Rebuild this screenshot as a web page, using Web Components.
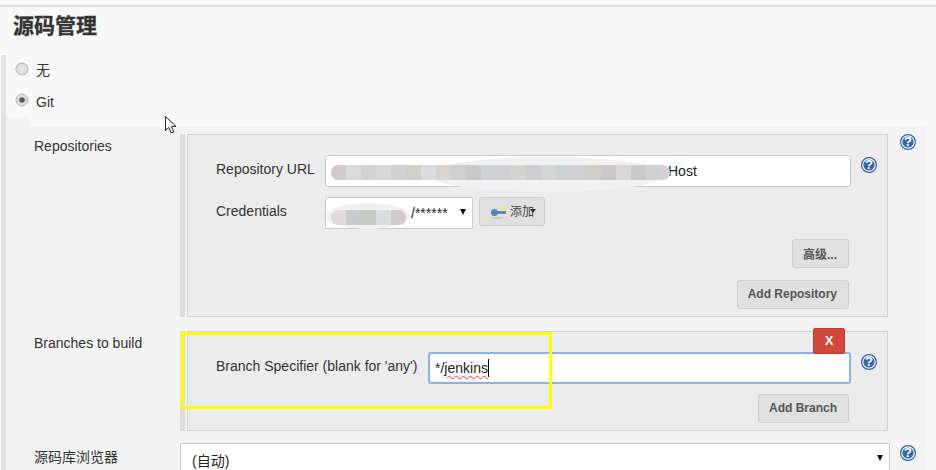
<!DOCTYPE html>
<html lang="zh">
<head>
<meta charset="utf-8">
<title>源码管理</title>
<style>
  html, body { margin: 0; height: 470px; overflow: hidden; background: #f9f9f9; }
  body { font: 14px "Liberation Sans", "Noto Sans CJK SC", sans-serif; color: #333; }
</style>
</head>
<body>
<jk-page>
  <jk-heading slot="head">源码管理</jk-heading>
  <jk-radio style="--shift:-1px">无</jk-radio>
  <jk-radio checked style="--shift:1px">Git</jk-radio>
  <jk-panel slot="panel">
    <jk-row label="Repositories">
      <jk-block>
        <jk-field label="Repository URL" style="--label-width:109px">
          <jk-input style="--text-indent:342px">Host</jk-input>
        </jk-field>
        <jk-field label="Credentials" style="--label-width:109px">
          <jk-select style="--select-width:148px;--text-indent:85px;--select-height:32px">/******</jk-select>
          <jk-button icon style="margin-left:6px;align-self:flex-start">添加</jk-button>
        </jk-field>
        <jk-actions><jk-button>高级...</jk-button></jk-actions>
        <jk-actions style="margin-top:2px"><jk-button>Add Repository</jk-button></jk-actions>
      </jk-block>
    </jk-row>
    <jk-row label="Branches to build" style="margin-top:14px" nohelp>
      <jk-block>
        <jk-delete slot="over">X</jk-delete>
        <jk-field label="Branch Specifier (blank for 'any')" style="--label-width:212px">
          <jk-input focused style="--text-indent:6px"><jk-typed>*/<u>jenkins</u></jk-typed></jk-input>
        </jk-field>
        <jk-actions><jk-button>Add Branch</jk-button></jk-actions>
      </jk-block>
    </jk-row>
    <jk-row label="源码库浏览器" style="margin-top:12px" lower>
      <jk-select style="--select-width:710px;--text-indent:11px;--select-height:40px;--select-line:34px">(自动)</jk-select>
    </jk-row>
  </jk-panel>
  <jk-mosaic slot="over" style="left:331px;top:165px;width:339px" colors="#d3c9cb #d9dcda #d3d4cf #d8d8d8 #d2d2d4 #d0d0c8 #d9dde0 #d9d4d0 #cfcfd3 #c9c9c8 #cdd0d6 #d0ced2 #d4d3d0 #ccced1 #d3d6d4 #cbd3d2 #cfced5 #cfcfc8 #cdc7cc #d8d8d6 #cbc9ca #d2d0d3 #d4d2d4" smear="left:96px;top:-8px;width:240px;height:35px"></jk-mosaic>
  <jk-mosaic slot="over" style="left:331px;top:210px;width:75px" colors="#e0dada #c9cbcd #c9cbc6 #d9dfdf #d2cbce" smear="left:-5px;top:-7px;width:84px;height:26px"></jk-mosaic>
  <jk-highlight slot="over"></jk-highlight>
  <jk-cursor slot="over"></jk-cursor>
</jk-page>

<script>
// small helper, every element has the same shadow setup
function shadow(el, html) {
  const root = el.attachShadow({ mode: 'open' });
  root.innerHTML = html;
  return root;
}

class JkPage extends HTMLElement {
  constructor() {
    super();
    shadow(this, `
      <style>
        :host { display: block; position: relative; height: 470px; overflow: hidden; padding-top: 5px; box-sizing: border-box; }
        .rule { height: 2px; background: #e0e0e0; }
        .section { margin: 0 0 0 1px; border-left: 5px solid #e2e2e2; }
        .radios { padding: 5px 0 0 9px; height: 57px; display: flex; flex-direction: column; gap: 11px; }
        .notch { height: 10px; width: 23px; background: #f3f3f3; }
      </style>
      <div class="rule"></div>
      <slot name="head"></slot>
      <div class="section">
        <div class="radios"><slot></slot></div>
        <div class="notch"></div>
        <slot name="panel"></slot>
      </div>
      <slot name="over"></slot>`);
  }
}

class JkHeading extends HTMLElement {
  constructor() {
    super();
    shadow(this, `
      <style>
        :host { display: block; height: 48px; padding-left: 13px; box-sizing: border-box;
          font: bold 21px/35px "Noto Sans CJK SC", sans-serif; color: #333; -webkit-text-stroke: .3px #333; }
      </style><slot></slot>`);
  }
}

class JkRadio extends HTMLElement {
  constructor() {
    super();
    const dot = this.hasAttribute('checked') ? '<circle cx="7" cy="7" r="2.8" fill="#5a5a5a"/>' : '';
    shadow(this, `
      <style>
        :host { display: flex; align-items: center; gap: 7px; height: 20px; margin-top: 0; }
        svg { width: 14px; height: 14px; margin-top: -3px; flex: none; }
        span { position: relative; top: var(--shift, 0); }
      </style>
      <svg viewBox="0 0 14 14"><defs><radialGradient id="g"><stop offset="0" stop-color="#ececec"/><stop offset="1" stop-color="#d6d6d6"/></radialGradient></defs>
      <circle cx="7" cy="7" r="6" fill="url(#g)" stroke="#b9b9b9"/>${dot}</svg>
      <span><slot></slot></span>`);
  }
}

class JkPanel extends HTMLElement {
  constructor() {
    super();
    shadow(this, `
      <style>
        :host { display: block; width: 920px; background: #f3f3f3; padding-top: 7px; height: 400px; box-sizing: border-box; }
      </style><slot></slot>`);
  }
}

class JkRow extends HTMLElement {
  constructor() {
    super();
    const help = this.hasAttribute('nohelp') ? '' : '<jk-help></jk-help>';
    shadow(this, `
      <style>
        :host { display: grid; grid-template-columns: 146px 710px 16px; column-gap: 0; padding-left: 28px; }
        .label { padding-top: 4px; line-height: 16px; }
        :host([lower]) .label { padding-top: 6px; }
        .help { margin-left: 10px; }
        :host([lower]) .help { margin-top: 2px; }
      </style>
      <div class="label">${this.getAttribute('label')}</div>
      <div><slot></slot></div>
      <div class="help">${help}</div>`);
  }
}

class JkBlock extends HTMLElement {
  constructor() {
    super();
    shadow(this, `
      <style>
        :host { display: block; position: relative; width: 708px; box-sizing: border-box; border-left: 5px solid #dcdcdc; padding-left: 2px; }
        .box { background: #ececec; border: 1px solid #d3d3d3; padding: 20px 0 7px 28px; display: flex; flex-direction: column; gap: 10px; }
      </style>
      <div class="box"><slot></slot></div>
      <slot name="over"></slot>`);
  }
}

class JkField extends HTMLElement {
  constructor() {
    super();
    shadow(this, `
      <style>
        :host { display: flex; }
        .label { width: var(--label-width); flex: none; line-height: 28px; }
        .body { display: flex; flex: 1; min-width: 0; }
      </style>
      <div class="label">${this.getAttribute('label')}</div>
      <div class="body"><slot></slot></div>`);
  }
}

class JkInput extends HTMLElement {
  constructor() {
    super();
    shadow(this, `
      <style>
        :host { display: flex; flex: 1; min-width: 0; }
        .box { flex: 1; height: 32px; box-sizing: border-box; background: #fff; border: 1px solid #ccc; border-radius: 3px;
          padding-left: var(--text-indent); line-height: 30px; color: #222; }
        :host([focused]) .box { border: 2px solid #8fb1e8; line-height: 28px; padding-left: 5px; }
        jk-help { margin: 2px 10px 0 10px; }
      </style>
      <div class="box"><slot></slot></div>
      <jk-help></jk-help>`);
  }
}

class JkTyped extends HTMLElement {
  constructor() {
    super();
    shadow(this, `
      <style>
        :host { display: inline-block; line-height: 18px; border-right: 1px solid #000; padding-right: 0; vertical-align: middle; margin-top: -2px; }
        ::slotted(u) { text-decoration: underline wavy #e33 1px; text-underline-offset: 2px; }
      </style><slot></slot>`);
  }
}

class JkSelect extends HTMLElement {
  constructor() {
    super();
    shadow(this, `
      <style>
        :host { display: block; width: var(--select-width); height: var(--select-height); box-sizing: border-box; position: relative;
          background: #fff; border: 1px solid #ccc; border-radius: 1px; padding-left: var(--text-indent); line-height: var(--select-line, 30px); color: #222; flex: none; }
        .arrow { position: absolute; right: 6px; top: 11px; width: 0; height: 0;
          border-left: 3.5px solid transparent; border-right: 3.5px solid transparent; border-top: 6px solid #111; }
      </style>
      <slot></slot><div class="arrow"></div>`);
  }
}

class JkButton extends HTMLElement {
  constructor() {
    super();
    const icon = this.hasAttribute('icon') ? `
      <svg width="18" height="16" viewBox="0 0 18 16" style="margin-top:2px">
        <ellipse cx="7.5" cy="14" rx="6.5" ry="1" fill="#c6c6c6"/>
        <circle cx="4.5" cy="8.5" r="3.6" fill="#5b87bd"/>
        <path d="M7 7.2h9v2.6H7z" fill="#4f7db5"/>
        <circle cx="13" cy="4" r="2.4" fill="#f4ea6a"/>
      </svg>
      <i></i>` : '';
    shadow(this, `
      <style>
        :host { display: inline-flex; align-items: center; height: 29px; box-sizing: border-box; padding: 0 11px 1px 10px; position: relative;
          background: #e0e0e0; border: 1px solid #cfcfcf; border-radius: 3px; color: #555;
          font: bold 12px "Liberation Sans", "Noto Sans CJK SC", sans-serif; white-space: nowrap; flex: none; }
        :host([icon]) { font-weight: normal; font-size: 12px; color: #444; padding: 0 10px 2px 10px; gap: 2px; width: 66px; }
        i { position: absolute; left: 50px; top: 11px; border-left: 3px solid transparent; border-right: 3px solid transparent; border-top: 4px solid #333; }
      </style>
      ${icon}<slot></slot>`);
  }
}

class JkActions extends HTMLElement {
  constructor() {
    super();
    shadow(this, `
      <style>:host { display: flex; justify-content: flex-end; padding-right: 38px; }</style><slot></slot>`);
  }
}

class JkHelp extends HTMLElement {
  constructor() {
    super();
    shadow(this, `
      <style>
        :host { display: block; width: 16px; height: 16px; flex: none; position: relative; }
        svg { display: block; }
        span { position: absolute; inset: 0; text-align: center; font: bold 13px/16px "Liberation Sans", sans-serif; color: #fff; }
      </style>
      <svg width="16" height="16" viewBox="0 0 16 16">
        <circle cx="8" cy="8" r="7.4" fill="#fff" stroke="#2f5f9e" stroke-width="1.2"/>
        <circle cx="8" cy="8" r="5.6" fill="#3566a6"/>
      </svg><span>?</span>`);
  }
}

class JkDelete extends HTMLElement {
  constructor() {
    super();
    shadow(this, `
      <style>
        :host { position: absolute; left: 628px; top: -3px; width: 32px; height: 26px; box-sizing: border-box;
          background: #d24939; border: 1px solid #c0392b; border-radius: 2px; color: #fff;
          font: bold 13px/24px "Liberation Sans", sans-serif; text-align: center; }
      </style><slot></slot>`);
  }
}

class JkMosaic extends HTMLElement {
  constructor() {
    super();
    const cells = this.getAttribute('colors').split(' ')
      .map(c => `<b style="background:${c}"></b>`).join('');
    shadow(this, `
      <style>
        :host { position: absolute; display: block; height: 15px; }
        .smear { position: absolute; background: #f1f1f1; border-radius: 50%; ${this.getAttribute('smear')} }
        .cells { position: relative; display: flex; border-radius: 7px; overflow: hidden; }
        b { display: block; width: 15px; height: 15px; flex: none; }
      </style>
      <div class="smear"></div><div class="cells">${cells}</div>`);
  }
}

class JkHighlight extends HTMLElement {
  constructor() {
    super();
    shadow(this, `
      <style>
        :host { position: absolute; left: 181px; top: 332px; width: 371px; height: 77px; box-sizing: border-box; border: 3px solid #ffff00; }
      </style>`);
  }
}

class JkCursor extends HTMLElement {
  constructor() {
    super();
    shadow(this, `
      <style>:host { position: absolute; left: 165px; top: 116px; width: 13px; height: 20px; }</style>
      <svg width="13" height="20" viewBox="0 0 13 20" style="display:block">
        <path d="M.5.5V14.5L3.8 11.4 6.2 17l2.6-1.1L6.4 10.4H11z" fill="#fff" stroke="#222" stroke-width="1"/>
      </svg>`);
  }
}

customElements.define('jk-page', JkPage);
customElements.define('jk-heading', JkHeading);
customElements.define('jk-radio', JkRadio);
customElements.define('jk-panel', JkPanel);
customElements.define('jk-row', JkRow);
customElements.define('jk-block', JkBlock);
customElements.define('jk-field', JkField);
customElements.define('jk-input', JkInput);
customElements.define('jk-typed', JkTyped);
customElements.define('jk-select', JkSelect);
customElements.define('jk-button', JkButton);
customElements.define('jk-actions', JkActions);
customElements.define('jk-help', JkHelp);
customElements.define('jk-delete', JkDelete);
customElements.define('jk-mosaic', JkMosaic);
customElements.define('jk-highlight', JkHighlight);
customElements.define('jk-cursor', JkCursor);
</script>
</body>
</html>
